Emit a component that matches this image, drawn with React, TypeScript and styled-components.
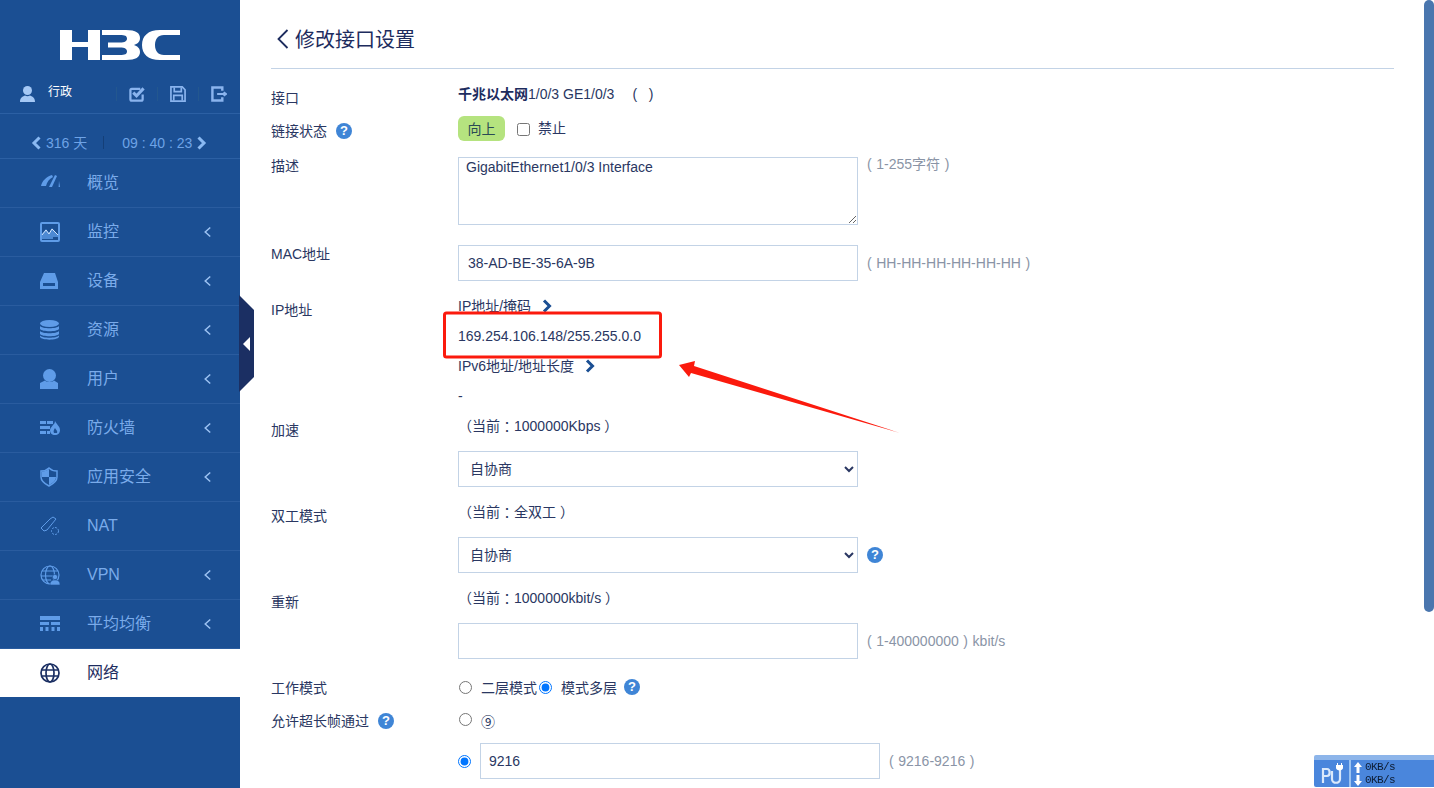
import React from "react";
import styled, { createGlobalStyle } from "styled-components";

const FONT = `"Liberation Sans", "Noto Sans CJK SC", Arial, sans-serif`;
const BLUE = "#1b4f93";
const ICON = "#5f9ce8";
const NAVY = "#1d2c5e";
const LINE = "#c3d3e6";

const Global = createGlobalStyle`
  html, body { margin: 0; padding: 0; height: 100%; overflow: hidden; background: #fff; }
  body { font-family: ${FONT}; font-size: 14px; color: ${NAVY}; }
  * { box-sizing: border-box; }
`;

const Page = styled.div`display: flex; height: 788px; width: 1434px; overflow: hidden;`;
const Sidebar = styled.aside`position: relative; flex: 0 0 240px; height: 100%; background: ${BLUE}; display: flex; flex-direction: column;`;
const LogoBox = styled.div`height: 78px; padding: 30px 0 0 60px;`;
const UserBar = styled.div`height: 36px; display: flex; align-items: flex-start; border-bottom: 1px solid #2c60a4; padding: 8px 0 0 20px;`;
const UserName = styled.span`font-size: 12px; line-height: 13px; color: #fff; margin: 0 0 0 13px;`;
const ToolGroup = styled.div`margin-left: 44px; display: flex; align-items: center; height: 16px;`;
const ToolDivider = styled.i`display: block; width: 1px; height: 14px; background: #23578f; margin-right: 12px;`;
const ToolIcon = styled.svg`display: block; width: 16px; height: 16px; margin-right: 12px; fill: none; stroke: #8ab4ee; stroke-width: 2;`;
const ClockBar = styled.div`height: 45px; border-bottom: 1px solid #2c60a4; display: flex; align-items: center; padding: 13px 0 0 31px; color: #6ea3e6; font-size: 14px; line-height: 18px;`;
const ClockDivider = styled.i`display: block; width: 1px; height: 13px; background: #143f78; margin: 0 14px 0 16px;`;
const ClockCaret = styled.svg`display: block; width: 11px; height: 14px; fill: none; stroke: #8ab9f2; stroke-width: 3;`;
const ClockText = styled.span<{ $gap: number }>`margin: 0 ${(p) => p.$gap}px 0 4px; white-space: pre;`;
const MenuList = styled.nav`display: flex; flex-direction: column;`;
const MenuItem = styled.div<{ $active?: boolean }>`
  height: 49px; display: flex; align-items: center; padding: 0 23px 1px 40px;
  border-bottom: 1px solid ${(p) => (p.$active ? BLUE : "#2a5c9f")};
  background: ${(p) => (p.$active ? "#fff" : BLUE)};
  color: ${(p) => (p.$active ? "#1d2c5e" : "#7aabea")};
  font-size: 16px;
`;
const MenuIcon = styled.svg`flex: 0 0 20px; width: 20px; height: 20px; margin-right: 27px; display: block;`;
const MenuLabel = styled.span`flex: 1; line-height: 20px;`;
const MenuCaret = styled.svg`display: block; width: 18px; height: 18px; fill: none; stroke: #9cc2f2; stroke-width: 2;`;
const Handle = styled.div`
  position: absolute; left: 239px; top: 295px; width: 15px; height: 97px; background: #1b2f63;
  clip-path: polygon(0 0, 100% 15px, 100% calc(100% - 15px), 0 100%);
  display: flex; align-items: center; padding-left: 4px;
  &::after { content: ""; border-style: solid; border-width: 7px 7px 7px 0; border-color: transparent #fff transparent transparent; }
`;

const Main = styled.main`flex: 1; padding: 0 40px 0 31px; min-width: 0;`;
const TitleBar = styled.header`height: 69px; border-bottom: 1px solid ${LINE}; display: flex; align-items: flex-start; padding: 26px 0 0 6px;`;
const Title = styled.h1`margin: 0 0 0 6px; font-size: 20px; font-weight: 400; line-height: 28px; color: ${NAVY};`;
const BackIcon = styled.svg`display: block; width: 12px; height: 22px; margin-top: 2px; fill: none; stroke: ${NAVY}; stroke-width: 1.8;`;
const Form = styled.form`padding-top: 10px; display: flex; flex-direction: column;`;
const Row = styled.div<{ $h?: number; $pb?: number }>`
  display: grid; grid-template-columns: 187px 1fr;
  ${(p) => (p.$h ? `height: ${p.$h}px;` : "")}
  padding-bottom: ${(p) => p.$pb ?? 0}px;
`;
const Label = styled.div`padding-top: 4px; line-height: 30px; font-size: 14px; display: flex; align-items: flex-start; color: #2a3762;`;
const Value = styled.div`display: flex; flex-direction: column; min-width: 0;`;
const Line = styled.div`height: 30px; line-height: 30px; display: flex; align-items: center; white-space: pre; color: #2a3762;`;
const Strong = styled.b`font-weight: 700; color: ${NAVY};`;
const Parens = styled.span`margin-left: 18px;`;
const Colon = styled.span`font-family: "Noto Sans CJK TC", sans-serif;`;
const Field = styled.div<{ $top?: boolean; $mt?: number }>`display: flex; align-items: ${(p) => (p.$top ? "flex-start" : "center")}; margin-top: ${(p) => p.$mt ?? 10}px;`;
const Hint = styled.span<{ $top?: boolean }>`margin-left: 9px; color: #8a94a6; font-size: 14px; white-space: pre; word-spacing: 0.7px; ${(p) => (p.$top ? "margin-top: -1px; line-height: 16px;" : "")}`;
const TextArea = styled.textarea`
  width: 400px; height: 68px; border: 1px solid ${LINE}; padding: 1px 7px; font: 14px/17px ${FONT}; color: #2a3762; display: block; border-radius: 0; outline: none;
`;
const TextInput = styled.input<{ $w?: number; $pl?: number }>`
  width: ${(p) => p.$w ?? 400}px; height: 36px; border: 1px solid ${LINE}; padding: 0 8px 0 ${(p) => p.$pl ?? 8}px; font: 14px ${FONT}; color: #2a3762; display: block; outline: none; border-radius: 0;
`;
const Select = styled.select`
  width: 400px; height: 36px; border: 1px solid ${LINE}; padding: 0 7px; font: 14px ${FONT}; color: #2a3762; background: #fff; display: block; border-radius: 0; outline: none;
`;
const StatusBadge = styled.span`display: inline-flex; width: 47px; height: 25px; margin-top: 4px; padding-bottom: 1px; align-items: center; justify-content: center; background: #b5e37f; border-radius: 6px; color: #2a4a55; font-size: 14px;`;
const StatusRow = styled.div`display: flex; align-items: flex-start;`;
const Check = styled.input`width: 13px; height: 13px; margin: 11px 8px 0 12px; display: block;`;
const CheckText = styled.span`margin-top: 7px; line-height: 18px; color: #2a3762;`;
const Help = styled.span<{ $ml?: number; $mt?: number }>`
  display: inline-flex; align-items: center; justify-content: center; width: 16px; height: 16px; border-radius: 50%;
  background: #3f85d6; color: #fff; font-size: 13px; font-weight: 700; line-height: 16px; margin-left: ${(p) => p.$ml ?? 8}px; margin-top: ${(p) => p.$mt ?? 0}px; flex: none;
`;
const Radio = styled.input<{ $ml?: number; $mr?: number }>`width: 13px; height: 13px; margin: 0 ${(p) => p.$mr ?? 9}px 0 ${(p) => p.$ml ?? 1}px; display: block; flex: none;`;
const RadioLine = styled.div<{ $h: number }>`display: flex; align-items: center; height: ${(p) => p.$h}px; white-space: nowrap; color: #2a3762;`;
const Circled = styled.span`font-family: "Noto Sans CJK SC", sans-serif; font-size: 14px; line-height: 16px; margin-top: 4px;`;
const LinkChevron = styled.svg`display: block; width: 10px; height: 14px; margin-left: 11px; fill: none; stroke: #1b4f93; stroke-width: 3;`;

const ScrollThumb = styled.div`position: fixed; right: 0; top: 0; width: 10px; height: 612px; background: #4a76ae; border-radius: 5px;`;
const Annotation = styled.svg`position: fixed; left: 0; top: 0; width: 1434px; height: 788px; pointer-events: none;`;
const NetWidget = styled.div`
  position: fixed; left: 1314px; top: 755px; width: 120px; height: 32px; background: #4a86dc; border-top: 5px solid #8db5ea; border-radius: 2px 0 0 2px;
  display: flex; color: #0d1c33; font: 11px/13px "Liberation Mono", "DejaVu Sans Mono", monospace; letter-spacing: -0.6px;
`;
const NetPlug = styled.div`flex: 0 0 37px; border-right: 2px solid #9cc4f2; display: flex; align-items: center; justify-content: center;`;
const NetRates = styled.div`display: flex; flex-direction: column; padding: 1px 0 0 3px;`;
const NetRate = styled.div`display: flex; align-items: center; height: 13px; gap: 3px;`;

type IconName = "gauge" | "monitor" | "device" | "db" | "user" | "firewall" | "shield" | "nat" | "vpn" | "lb" | "net";

function IconArt({ name, c }: { name: IconName; c: string }) {
  switch (name) {
    case "gauge":
      return (
        <g fill={c}>
          <path d="M1 13C2 8 6 4 12 2L13 4C9 6 7 9 6 13Z" />
          <path d="M9 14L15 2L17 3L12 14Z" />
          <path d="M19 8L20 14H18.6Z" />
        </g>
      );
    case "monitor":
      return (
        <g>
          <rect x="1" y="1" width="18" height="18" rx="1" fill="none" stroke={c} strokeWidth="2" />
          <path d="M1 13L6 7L9 11L12 6L18 13V15H13V17H2V15Z" fill={c} opacity=".75" />
          <path d="M2 13L6 8L9 12L12 7L18 13" fill="none" stroke="#cfe2fa" strokeWidth="1" />
        </g>
      );
    case "device":
      return <path fillRule="evenodd" fill={c} d="M4 1H15L18 10V17H0V10ZM3 11V14H15V11Z" transform="translate(0 1)" />;
    case "db":
      return (
        <g fill={c}>
          <ellipse cx="9.5" cy="3.5" rx="9.5" ry="3.5" />
          <path d="M0 6C2 9 17 9 19 6V9C17 12 2 12 0 9Z" />
          <path d="M0 11C2 14 17 14 19 11V14C17 17 2 17 0 14Z" />
          <path d="M0 15.5C2 18.5 17 18.5 19 15.5V17C17 20.5 2 20.5 0 17Z" />
        </g>
      );
    case "user":
      return (
        <g fill={c}>
          <circle cx="9.5" cy="6.5" r="6.5" />
          <path d="M0 14L5 11.5C7 13.5 12 13.5 14 11.5L18 14V20H0Z" />
        </g>
      );
    case "firewall":
      return (
        <g fill={c}>
          <rect x="0" y="3" width="6" height="3" />
          <rect x="7" y="3" width="6" height="3" />
          <rect x="0" y="8" width="10" height="3" />
          <rect x="0" y="13" width="6" height="3" />
          <rect x="7" y="13" width="3" height="3" />
          <path fillRule="evenodd" d="M15 3C16 6 20 8 20 12C20 15 18 17 15 17C12 17 10 15 10 12C10 10 12 9 13 7C14 6 15 5 15 3ZM15 10C14 12 13 13 14 15H17C18 13 16 12 15 10Z" />
        </g>
      );
    case "shield":
      return (
        <g>
          <path d="M9 1C11 3 14 4 17 4V10C17 14 13 17 9 19C5 17 1 14 1 10V4C4 4 7 3 9 1Z" fill="none" stroke={c} strokeWidth="1.5" />
          <path d="M9 2V10H2V4.5C5 4.5 7 3.5 9 2ZM9 10H16C16 13.5 12.5 16.5 9 18Z" fill={c} />
        </g>
      );
    case "nat":
      return (
        <g fill="none" stroke={c} strokeWidth="1">
          <path d="M1 12L10 3L13 1L16 3L7 14L4 15Z" />
          <circle cx="15" cy="15" r="3.5" strokeDasharray="2 1.2" />
        </g>
      );
    case "vpn":
      return (
        <g>
          <g fill="none" stroke={c} strokeWidth="1.2">
            <circle cx="10" cy="10" r="9" />
            <ellipse cx="10" cy="10" rx="4.5" ry="9" />
            <path d="M2 6H18M1 11H14M3 15H11" />
          </g>
          <circle cx="15" cy="12" r="2.6" fill={c} stroke={BLUE} strokeWidth=".6" />
          <path d="M10 20C10 16 12 15 15 15C18 15 20 16 20 20Z" fill={c} stroke={BLUE} strokeWidth=".6" />
        </g>
      );
    case "lb":
      return (
        <g fill={c}>
          <rect x="0" y="2" width="20" height="4" />
          <rect x="0" y="8" width="9" height="3" />
          <rect x="11" y="8" width="9" height="3" />
          <rect x="0" y="13" width="3" height="4" />
          <rect x="5.5" y="13" width="3" height="4" />
          <rect x="11.5" y="13" width="3" height="4" />
          <rect x="17" y="13" width="3" height="4" />
        </g>
      );
    case "net":
      return (
        <g fill="none" stroke={c} strokeWidth="1.7">
          <circle cx="10" cy="10" r="9" />
          <ellipse cx="10" cy="10" rx="4" ry="9" />
          <path d="M1.5 7H18.5M1.5 13H18.5" />
        </g>
      );
  }
}

const MENU: { label: string; icon: IconName; caret?: boolean; active?: boolean }[] = [
  { label: "概览", icon: "gauge" },
  { label: "监控", icon: "monitor", caret: true },
  { label: "设备", icon: "device", caret: true },
  { label: "资源", icon: "db", caret: true },
  { label: "用户", icon: "user", caret: true },
  { label: "防火墙", icon: "firewall", caret: true },
  { label: "应用安全", icon: "shield", caret: true },
  { label: "NAT", icon: "nat" },
  { label: "VPN", icon: "vpn", caret: true },
  { label: "平均均衡", icon: "lb", caret: true },
  { label: "网络", icon: "net", active: true },
];

const H3CLogo = () => (
  <svg width="120" height="30" viewBox="0 0 120 30" style={{ display: "block" }}>
    <g fill="#fff">
      <path d="M0 0H12V12H28V0H40V30H28V17H12V30H0Z" />
      <path d="M42 0H66C76 0 80 3 80 8C80 12 77 14 74 15C77 16 80 18 80 22C80 27 76 30 66 30H42V25H60C65 25 67 24 67 21.5C67 19 65 17.5 60 17.5H48V12.5H60C65 12.5 67 11 67 8.5C67 6 65 5 60 5H42Z" />
      <path d="M120 0H100C88 0 82 6 82 15C82 24 88 30 100 30H120V25H104C98 25 95 21 95 15C95 9 98 5 104 5H120Z" />
    </g>
  </svg>
);

const ChevronLink = () => (
  <LinkChevron viewBox="0 0 10 14">
    <path d="M2 1.5L7.5 7L2 12.5" />
  </LinkChevron>
);

const Arrow = ({ up }: { up?: boolean }) => (
  <svg width="8" height="11" viewBox="0 0 8 11" style={{ display: "block" }}>
    <path fill="#fff" d={up ? "M4 0L8 5H5.5V11H2.5V5H0Z" : "M4 11L8 6H5.5V0H2.5V6H0Z"} />
  </svg>
);

export default function App() {
  return (
    <Page>
      <Global />
      <Sidebar>
        <LogoBox>
          <H3CLogo />
        </LogoBox>
        <UserBar>
          <svg width="15" height="16" viewBox="0 0 15 16" style={{ display: "block" }}>
            <circle cx="7.5" cy="4.5" r="4.5" fill="#a5c8f5" />
            <path d="M0 16C0 12 2 10.5 5 9.5C6.5 10.5 8.5 10.5 10 9.5C13 10.5 15 12 15 16Z" fill="#a5c8f5" />
          </svg>
          <UserName>行政</UserName>
          <ToolGroup>
            <ToolDivider />
            <ToolIcon viewBox="0 0 17 17">
              <path d="M12 3H3C2 3 1.5 3.5 1.5 4.5V14C1.5 15 2 15.5 3 15.5H13C14 15.5 14.5 15 14.5 14V9" strokeWidth="2.4" />
              <path d="M4.5 7L8 10.5L15.5 2.5" strokeWidth="3.2" />
            </ToolIcon>
            <ToolDivider />
            <ToolIcon viewBox="0 0 17 17">
              <path d="M1 1H13L16 4V16H1Z" strokeWidth="1.8" />
              <path d="M4.5 1.5V6H12V1.5M4 15.5V10H13V15.5" strokeWidth="1.8" />
            </ToolIcon>
            <ToolDivider />
            <ToolIcon viewBox="0 0 17 17">
              <path d="M12 5V1.5H1.5V15.5H12V12" strokeWidth="2.6" />
              <path d="M6.5 8.5H16M13.5 6.5L16 8.5L13.5 10.5" strokeWidth="2" />
            </ToolIcon>
          </ToolGroup>
        </UserBar>
        <ClockBar>
          <ClockCaret viewBox="0 0 11 14">
            <path d="M8.5 1.5L3 7L8.5 12.5" />
          </ClockCaret>
          <ClockText $gap={0}>316 天</ClockText>
          <ClockDivider />
          <ClockText $gap={4}>09 : 40 : 23</ClockText>
          <ClockCaret viewBox="0 0 11 14">
            <path d="M2.5 1.5L8 7L2.5 12.5" />
          </ClockCaret>
        </ClockBar>
        <MenuList>
          {MENU.map((m) => (
            <MenuItem key={m.label} $active={m.active}>
              <MenuIcon viewBox="0 0 20 20">
                <IconArt name={m.icon} c={m.active ? "#1b2f63" : ICON} />
              </MenuIcon>
              <MenuLabel>{m.label}</MenuLabel>
              {m.caret && (
                <MenuCaret viewBox="0 0 24 24">
                  <path d="M15 6L8.3 12L15 18" />
                </MenuCaret>
              )}
            </MenuItem>
          ))}
        </MenuList>
        <Handle />
      </Sidebar>

      <Main>
        <TitleBar>
          <BackIcon viewBox="0 0 12 22">
            <path d="M10.5 2L1.5 11L10.5 20" />
          </BackIcon>
          <Title>修改接口设置</Title>
        </TitleBar>
        <Form>
          <Row $h={33}>
            <Label>接口</Label>
            <Value>
              <Line>
                <Strong>千兆以太网</Strong>1/0/3 GE1/0/3
                <Parens>(   )</Parens>
              </Line>
            </Value>
          </Row>
          <Row $h={35}>
            <Label>
              链接状态
              <Help $ml={9} $mt={7}>?</Help>
            </Label>
            <Value>
              <StatusRow>
                <StatusBadge>向上</StatusBadge>
                <Check type="checkbox" readOnly />
                <CheckText>禁止</CheckText>
              </StatusRow>
            </Value>
          </Row>
          <Row $pb={10}>
            <Label>描述</Label>
            <Value>
              <Field $top>
                <TextArea readOnly value="GigabitEthernet1/0/3 Interface" />
                <Hint $top>( 1-255字符 )</Hint>
              </Field>
            </Value>
          </Row>
          <Row $pb={10}>
            <Label>MAC地址</Label>
            <Value>
              <Field>
                <TextInput readOnly value="38-AD-BE-35-6A-9B" $pl={9} />
                <Hint>( HH-HH-HH-HH-HH-HH )</Hint>
              </Field>
            </Value>
          </Row>
          <Row>
            <Label>IP地址</Label>
            <Value>
              <Line>
                IP地址/掩码
                <ChevronLink />
              </Line>
              <Line>169.254.106.148/255.255.0.0</Line>
              <Line>
                IPv6地址/地址长度
                <ChevronLink />
              </Line>
              <Line>-</Line>
            </Value>
          </Row>
          <Row $pb={10}>
            <Label>加速</Label>
            <Value>
              <Line>（当前<Colon>：</Colon>1000000Kbps ）</Line>
              <Field>
                <Select defaultValue="auto">
                  <option value="auto">自协商</option>
                </Select>
              </Field>
            </Value>
          </Row>
          <Row $pb={10}>
            <Label>双工模式</Label>
            <Value>
              <Line>（当前<Colon>：</Colon>全双工 ）</Line>
              <Field>
                <Select defaultValue="auto">
                  <option value="auto">自协商</option>
                </Select>
                <Help $ml={9}>?</Help>
              </Field>
            </Value>
          </Row>
          <Row $pb={10}>
            <Label>重新</Label>
            <Value>
              <Line>（当前<Colon>：</Colon>1000000kbit/s ）</Line>
              <Field>
                <TextInput readOnly value="" />
                <Hint>( 1-400000000 ) kbit/s</Hint>
              </Field>
            </Value>
          </Row>
          <Row $h={33}>
            <Label>工作模式</Label>
            <Value>
              <RadioLine $h={36}>
                <Radio type="radio" name="mode" readOnly />
                二层模式
                <Radio type="radio" name="mode" defaultChecked $ml={2} />
                模式多层
                <Help $ml={7}>?</Help>
              </RadioLine>
            </Value>
          </Row>
          <Row $h={31}>
            <Label>
              允许超长帧通过
              <Help $ml={9} $mt={7}>?</Help>
            </Label>
            <Value>
              <RadioLine $h={34}>
                <Radio type="radio" name="jumbo" readOnly />
                <Circled>⑨</Circled>
              </RadioLine>
            </Value>
          </Row>
          <Row>
            <div />
            <Value>
              <Field>
                <Radio type="radio" name="jumbo" defaultChecked $ml={0} />
                <TextInput readOnly value="9216" />
                <Hint>( 9216-9216 )</Hint>
              </Field>
            </Value>
          </Row>
        </Form>
      </Main>

      <Annotation viewBox="0 0 1434 788">
        <rect x="444.5" y="313" width="216" height="44" rx="2" fill="none" stroke="#fb1a0d" strokeWidth="3" />
        <polygon points="679,365 695,361 694,366 900,433 691,373 689,377" fill="#fb1a0d" />
      </Annotation>
      <ScrollThumb />
      <NetWidget>
        <NetPlug>
          <svg width="28" height="24" viewBox="0 0 28 24">
            <path d="M5 21V7H9C12.5 7 12.5 14 9 14H5M14 9V17C14 22 22 22 22 17V8" fill="none" stroke="#dbe9fb" strokeWidth="2.2" />
            <path d="M19 1V3H18V6C18 7.5 20 8.5 21.5 8.5C23 8.5 25 7.5 25 6V3H24V1H23V3H20V1Z" fill="#fff" />
          </svg>
        </NetPlug>
        <NetRates>
          <NetRate>
            <Arrow up />
            0KB/s
          </NetRate>
          <NetRate>
            <Arrow />
            0KB/s
          </NetRate>
        </NetRates>
      </NetWidget>
    </Page>
  );
}
